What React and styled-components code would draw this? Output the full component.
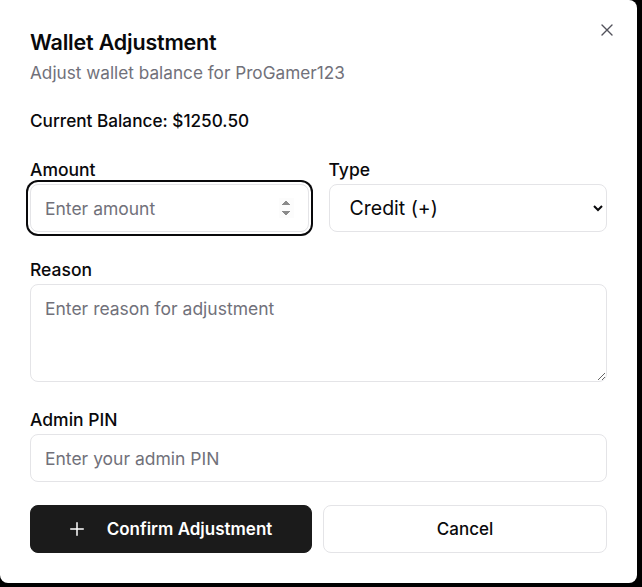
import React from "react";
import styled, { createGlobalStyle } from "styled-components";

const Global = createGlobalStyle`
  html, body { margin: 0; padding: 0; background: #000; }
  body { font-family: Inter, "Noto Sans", sans-serif; color: #09090b; }
  * { box-sizing: border-box; }
`;

const Dialog = styled.div`
  position: relative;
  width: 637px;
  background: #fff;
  border-radius: 0 8px 8px 8px;
  padding: 28px 30px 30px 30px;
  display: flex;
  flex-direction: column;
`;

const Close = styled.button`
  position: absolute;
  top: 22px;
  right: 22px;
  width: 16px;
  height: 16px;
  padding: 0;
  border: none;
  background: transparent;
  display: flex;
  align-items: center;
  justify-content: center;
  color: #52525b;
`;

const Title = styled.h2`
  margin: 0;
  font-size: 21.5px;
  line-height: 28px;
  font-weight: 600;
  letter-spacing: -0.2px;
`;

const Subtitle = styled.p`
  margin: 5px 0 0;
  font-size: 17.2px;
  line-height: 24px;
  color: #71717a;
`;

const Balance = styled.div`
  margin-top: 24px;
  font-size: 17.2px;
  line-height: 24px;
  font-weight: 500;
`;

const Row = styled.div`
  display: grid;
  grid-template-columns: 1fr 1fr;
  gap: 20px;
  margin-top: ${(p) => p.$mt || 0}px;
`;

const Field = styled.div`
  display: flex;
  flex-direction: column;
  margin-top: ${(p) => p.$mt || 0}px;
`;

const Label = styled.label`
  font-size: 17.5px;
  line-height: 24px;
  font-weight: 450;
  margin-bottom: 2px;
`;

const inputBase = `
  width: 100%;
  border: 1px solid #e4e4e7;
  border-radius: 8px;
  background: #fff;
  font-family: Inter, "Noto Sans", sans-serif;
  font-size: 17.5px;
  color: #09090b;
  outline: none;
  &::placeholder { color: #71717a; }
`;

const Input = styled.input`
  ${inputBase}
  height: 48px;
  padding: 0 14px;
  &:focus {
    box-shadow: 0 0 0 2px #fff, 0 0 0 4px #09090b;
  }
`;

const Select = styled.select`
  ${inputBase}
  height: 48px;
  padding: 0 10px 0 16px;
  font-size: 19.5px;
`;

const TextArea = styled.textarea`
  ${inputBase}
  height: 98px;
  padding: 12px 14px;
  line-height: 24px;
  resize: vertical;
  display: block;
`;

const Actions = styled.div`
  display: grid;
  grid-template-columns: 282px 1fr;
  gap: 11px;
  margin-top: 23px;
`;

const Button = styled.button`
  height: 48px;
  border-radius: 8px;
  font-family: Inter, "Noto Sans", sans-serif;
  font-size: 17px;
  font-weight: ${(p) => (p.$primary ? 600 : 450)};
  display: flex;
  align-items: center;
  justify-content: center;
  gap: 23px;
  cursor: pointer;
  background: ${(p) => (p.$primary ? "#1b1b1b" : "#fff")};
  color: ${(p) => (p.$primary ? "#fff" : "#09090b")};
  border: 1px solid ${(p) => (p.$primary ? "#1b1b1b" : "#e4e4e7")};
`;

export default function App() {
  return (
    <>
      <Global />
      <Dialog>
        <Close aria-label="Close">
          <svg width="12" height="12" viewBox="0 0 12 12" fill="none" stroke="currentColor" strokeWidth="1.4" strokeLinecap="round">
            <path d="M1 1L11 11M11 1L1 11" />
          </svg>
        </Close>
        <Title>Wallet Adjustment</Title>
        <Subtitle>Adjust wallet balance for ProGamer123</Subtitle>
        <Balance>Current Balance: $1250.50</Balance>
        <Row $mt={25}>
          <Field>
            <Label>Amount</Label>
            <Input type="number" placeholder="Enter amount" autoFocus />
          </Field>
          <Field>
            <Label>Type</Label>
            <Select defaultValue="credit">
              <option value="credit">Credit (+)</option>
              <option value="debit">Debit (-)</option>
            </Select>
          </Field>
        </Row>
        <Field $mt={26}>
          <Label>Reason</Label>
          <TextArea placeholder="Enter reason for adjustment" />
        </Field>
        <Field $mt={26}>
          <Label>Admin PIN</Label>
          <Input type="password" placeholder="Enter your admin PIN" />
        </Field>
        <Actions>
          <Button $primary>
            <svg width="14" height="14" viewBox="0 0 14 14" fill="none" stroke="currentColor" strokeWidth="1.5" strokeLinecap="round">
              <path d="M7 0.75V13.25M0.75 7H13.25" />
            </svg>
            Confirm Adjustment
          </Button>
          <Button>Cancel</Button>
        </Actions>
      </Dialog>
    </>
  );
}
